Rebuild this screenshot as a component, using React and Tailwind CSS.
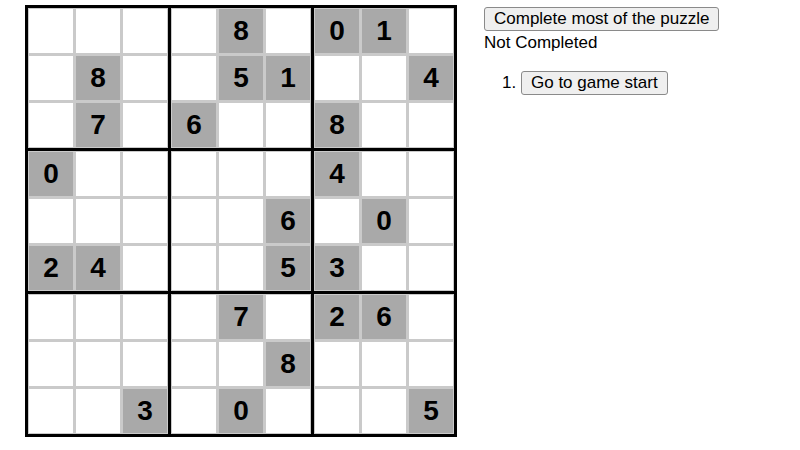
import React from "react";

const puzzle = [
  ["", "", "", "", "8", "", "0", "1", ""],
  ["", "8", "", "", "5", "1", "", "", "4"],
  ["", "7", "", "6", "", "", "8", "", ""],
  ["0", "", "", "", "", "", "4", "", ""],
  ["", "", "", "", "", "6", "", "0", ""],
  ["2", "4", "", "", "", "5", "3", "", ""],
  ["", "", "", "", "7", "", "2", "6", ""],
  ["", "", "", "", "", "8", "", "", ""],
  ["", "", "3", "", "0", "", "", "", "5"],
];

const Block = ({ br, bc }) => {
  const cells = [];
  for (let r = 0; r < 3; r++) {
    for (let c = 0; c < 3; c++) {
      const v = puzzle[br * 3 + r][bc * 3 + c];
      cells.push(
        <div
          key={r + "-" + c}
          className={
            "w-[44px] h-[44px] flex items-center justify-center text-[28px] leading-none font-bold text-black " +
            (v ? "bg-[#a9a9a9]" : "bg-white")
          }
        >
          {v}
        </div>
      );
    }
  }
  return (
    <div className="grid grid-cols-3 gap-[3px] p-[1px] bg-[#cacaca]">{cells}</div>
  );
};

const Board = () => (
  <div className="grid grid-cols-3 gap-[3px] bg-black border-[3px] border-black w-fit">
    {[0, 1, 2].map((br) =>
      [0, 1, 2].map((bc) => <Block key={br + "" + bc} br={br} bc={bc} />)
    )}
  </div>
);

export default function App() {
  return (
    <div
      className="flex items-start gap-[27px] pl-[25px] pt-[5px] bg-white min-h-[450px] text-[17px] text-black"
      style={{ fontFamily: "'Liberation Sans', Arial, sans-serif" }}
    >
      <Board />
      <div className="pt-[1px]">
        <button className="h-[24px] px-[9px] bg-[#efefef] border border-[#8a8a8a] rounded-[3px] leading-[20px]">
          Complete most of the puzzle
        </button>
        <div className="leading-[20px] mt-[1px]">Not Completed</div>
        <ol className="list-decimal pl-[37px] mt-[17px]">
          <li>
            <button className="h-[24px] px-[9px] bg-[#efefef] border border-[#8a8a8a] rounded-[3px] leading-[20px]">
              Go to game start
            </button>
          </li>
        </ol>
      </div>
    </div>
  );
}
